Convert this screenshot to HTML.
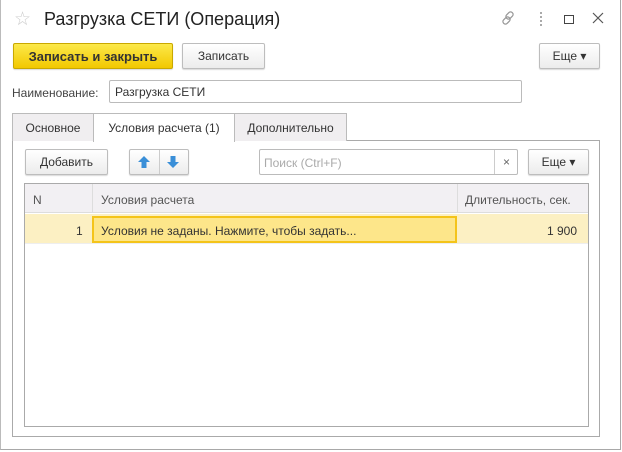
<html><head><style>
body{margin:0;width:622px;height:452px;background:#fff;font-family:"Liberation Sans",sans-serif;font-size:12px;color:#333;position:relative;overflow:hidden}
div{position:absolute;box-sizing:border-box}
.btn{border:1px solid #bdbdbd;border-radius:2px;background:linear-gradient(#fff,#ececec);box-shadow:0 1px 1px rgba(0,0,0,.15);text-align:center;line-height:25px;color:#333}
</style></head><body>
<div style="left:0;top:0;width:621px;height:450px;border:1px solid #a8a8a8;border-top:none;border-left:1px solid #bbb"></div>
<div style="left:14px;top:8px;font-size:19px;color:#ccc">☆</div>
<div style="left:44px;top:9px;font-size:18px;color:#222">Разгрузка СЕТИ (Операция)</div>
<svg style="position:absolute;left:500px;top:10px" width="16" height="16" viewBox="0 0 16 16"><g fill="none" stroke="#999" stroke-width="1.3"><rect x="7" y="1.5" width="5" height="8" rx="2.5" transform="rotate(45 9.5 5.5)"/><rect x="4" y="6.5" width="5" height="8" rx="2.5" transform="rotate(45 6.5 10.5)"/></g></svg>
<div style="left:540px;top:12px;width:3px;height:14px;border-left:2px dotted #aaa"></div>
<div style="left:564px;top:15px;width:10px;height:9px;border:1px solid #444"></div>
<svg style="position:absolute;left:592px;top:12px" width="12" height="12"><path d="M1 1L11 11M11 1L1 11" stroke="#555" stroke-width="1.2"/></svg>
<div class="btn" style="left:13px;top:43px;width:160px;height:26px;background:linear-gradient(#fce94a,#f2c800);border-color:#c9a800;font-weight:bold;color:#333;font-size:13px">Записать и закрыть</div>
<div class="btn" style="left:182px;top:43px;width:83px;height:26px">Записать</div>
<div class="btn" style="left:539px;top:43px;width:61px;height:26px">Еще ▾</div>
<div style="left:12px;top:86px;color:#444">Наименование:</div>
<div style="left:109px;top:80px;width:413px;height:23px;border:1px solid #bbb;border-radius:2px;padding:4px 5px;color:#333">Разгрузка СЕТИ</div>
<div style="left:12px;top:140px;width:588px;height:297px;border:1px solid #aaa"></div>
<div style="left:12px;top:113px;width:82px;height:28px;background:#f0eef0;border:1px solid #bbb;border-bottom:none;text-align:center;line-height:28px">Основное</div>
<div style="left:93px;top:113px;width:142px;height:29px;background:#fff;border:1px solid #bbb;border-bottom:none;text-align:center;line-height:28px">Условия расчета (1)</div>
<div style="left:234px;top:113px;width:113px;height:28px;background:#f0eef0;border:1px solid #bbb;border-bottom:none;text-align:center;line-height:28px">Дополнительно</div>
<div class="btn" style="left:25px;top:149px;width:83px;height:26px">Добавить</div>
<div class="btn" style="left:129px;top:149px;width:60px;height:26px"></div>
<div style="left:159px;top:150px;width:1px;height:24px;background:#ccc"></div>
<svg style="position:absolute;left:137px;top:155px" width="14" height="14"><path d="M7 1L13 7H9.5V13H4.5V7H1Z" fill="#3a8fd8"/></svg>
<svg style="position:absolute;left:166px;top:155px" width="14" height="14"><path d="M7 13L13 7H9.5V1H4.5V7H1Z" fill="#3a8fd8"/></svg>
<div style="left:259px;top:149px;width:259px;height:26px;border:1px solid #bbb;border-radius:2px;padding:6px 4px;color:#aaa">Поиск (Ctrl+F)</div>
<div style="left:494px;top:150px;width:1px;height:24px;background:#ccc"></div>
<div style="left:503px;top:155px;color:#666;font-size:12px">×</div>
<div class="btn" style="left:528px;top:149px;width:61px;height:26px">Еще ▾</div>
<div style="left:24px;top:183px;width:565px;height:244px;border:1px solid #aaa"></div>
<div style="left:25px;top:184px;width:563px;height:29px;background:#f2f0f3;border-bottom:1px solid #ddd"></div>
<div style="left:92px;top:184px;width:1px;height:29px;background:#ddd"></div>
<div style="left:457px;top:184px;width:1px;height:29px;background:#ddd"></div>
<div style="left:33px;top:193px;color:#555">N</div>
<div style="left:101px;top:193px;color:#555">Условия расчета</div>
<div style="left:465px;top:193px;color:#555">Длительность, сек.</div>
<div style="left:25px;top:214px;width:563px;height:30px;background:#fcf0c3;border-bottom:1px solid #eee"></div>
<div style="left:92px;top:216px;width:365px;height:27px;background:#fde68a;border:2px solid #f4c41a"></div>
<div style="left:76px;top:224px;color:#333">1</div>
<div style="left:101px;top:224px;color:#333">Условия не заданы. Нажмите, чтобы задать...</div>
<div style="left:547px;top:224px;color:#333">1 900</div>
</body></html>
